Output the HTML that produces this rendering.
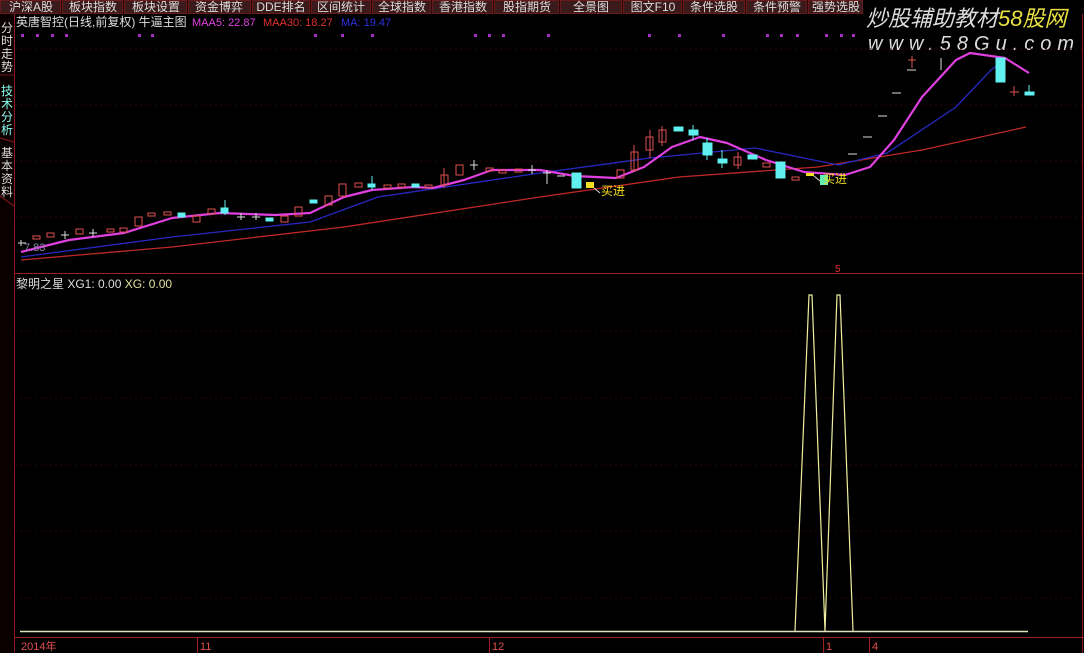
<!DOCTYPE html>
<html><head><meta charset="utf-8"><style>
body{margin:0;background:#000;width:1084px;height:653px;overflow:hidden;font-family:"Liberation Sans","Noto Sans CJK SC",sans-serif}
</style></head><body>
<svg width="1084" height="653" xmlns="http://www.w3.org/2000/svg" style="display:block;font-family:'Liberation Sans','Noto Sans CJK SC',sans-serif">
<rect width="1084" height="653" fill="#000"/>
<!-- menu -->
<rect x="0" y="0" width="862" height="14" fill="#2a0606"/>
<g fill="#3a1a1a" stroke="#6a1a1a" stroke-width="1">
<rect x="0.5" y="0.5" width="60" height="13"/><rect x="62.5" y="0.5" width="60" height="13"/><rect x="124.5" y="0.5" width="62" height="13"/><rect x="188.5" y="0.5" width="62" height="13"/><rect x="252.5" y="0.5" width="57" height="13"/><rect x="311.5" y="0.5" width="59" height="13"/><rect x="372.5" y="0.5" width="58" height="13"/><rect x="432.5" y="0.5" width="60" height="13"/><rect x="494.5" y="0.5" width="64" height="13"/><rect x="560.5" y="0.5" width="61" height="13"/><rect x="623.5" y="0.5" width="58" height="13"/><rect x="683.5" y="0.5" width="61" height="13"/><rect x="746.5" y="0.5" width="60" height="13"/><rect x="808.5" y="0.5" width="54" height="13"/>
</g>
<g fill="#ddd" font-size="12" text-anchor="middle">
<text x="31" y="11">沪深A股</text><text x="93" y="11">板块指数</text><text x="156" y="11">板块设置</text><text x="219" y="11">资金博弈</text><text x="281" y="11">DDE排名</text><text x="341" y="11">区间统计</text><text x="402" y="11">全球指数</text><text x="463" y="11">香港指数</text><text x="527" y="11">股指期货</text><text x="591" y="11">全景图</text><text x="653" y="11">图文F10</text><text x="714" y="11">条件选股</text><text x="777" y="11">条件预警</text><text x="836" y="11">强势选股</text>
</g>
<!-- watermark -->
<text x="866" y="26" font-size="22" font-style="italic" fill="#ddd">炒股辅助教材<tspan fill="#e8e040">58股网</tspan></text>
<text x="868" y="50" font-size="20" font-style="italic" fill="#ddd" letter-spacing="6">www.58Gu.com</text>
<!-- sidebar -->
<rect x="0" y="14" width="14" height="639" fill="#0a0000"/>
<line x1="14.5" y1="14" x2="14.5" y2="653" stroke="#8a1a1a"/>
<g font-size="12" text-anchor="middle">
<text x="7" y="32" fill="#ddd">分</text><text x="7" y="45" fill="#ddd">时</text><text x="7" y="58" fill="#ddd">走</text><text x="7" y="71" fill="#ddd">势</text>
<text x="7" y="95" fill="#8fe">技</text><text x="7" y="108" fill="#8fe">术</text><text x="7" y="121" fill="#8fe">分</text><text x="7" y="134" fill="#8fe">析</text>
<text x="7" y="157" fill="#ddd">基</text><text x="7" y="170" fill="#ddd">本</text><text x="7" y="183" fill="#ddd">资</text><text x="7" y="196" fill="#ddd">料</text>
</g>
<line x1="0" y1="75" x2="14" y2="75" stroke="#6a1a1a"/><line x1="0" y1="138" x2="14" y2="142" stroke="#8a1a1a"/><line x1="0" y1="196" x2="14" y2="206" stroke="#8a1a1a"/>
<!-- frame -->
<line x1="1082.5" y1="14" x2="1082.5" y2="653" stroke="#8a1a1a"/>
<line x1="15" y1="273.5" x2="1084" y2="273.5" stroke="#a02020"/>
<line x1="15" y1="637.5" x2="1084" y2="637.5" stroke="#a02020"/>
<!-- grid -->
<g stroke="#2a0606" stroke-dasharray="2,3">
<line x1="15" y1="49" x2="1082" y2="49"/><line x1="15" y1="105" x2="1082" y2="105"/><line x1="15" y1="161" x2="1082" y2="161"/><line x1="15" y1="217" x2="1082" y2="217"/>
<line x1="15" y1="331" x2="1082" y2="331"/><line x1="15" y1="398" x2="1082" y2="398"/><line x1="15" y1="465" x2="1082" y2="465"/><line x1="15" y1="531" x2="1082" y2="531"/><line x1="15" y1="598" x2="1082" y2="598"/>
</g>
<!-- title -->
<text x="16" y="26" font-size="12" fill="#ddd">英唐智控(日线,前复权) 牛逼主图</text>
<text x="192" y="26" font-size="11" fill="#e040e0">MAA5: 22.87</text>
<text x="263" y="26" font-size="11" fill="#e03030">MAA30: 18.27</text>
<text x="341" y="26" font-size="11" fill="#3030e0">MA: 19.47</text>
<g fill="#a030c0">
<rect x="21" y="34" width="3" height="3"/><rect x="36" y="34" width="3" height="3"/><rect x="51" y="34" width="3" height="3"/><rect x="65" y="34" width="3" height="3"/><rect x="138" y="34" width="3" height="3"/><rect x="151" y="34" width="3" height="3"/><rect x="314" y="34" width="3" height="3"/><rect x="341" y="34" width="3" height="3"/><rect x="371" y="34" width="3" height="3"/><rect x="474" y="34" width="3" height="3"/><rect x="488" y="34" width="3" height="3"/><rect x="502" y="34" width="3" height="3"/><rect x="547" y="34" width="3" height="3"/><rect x="648" y="34" width="3" height="3"/><rect x="678" y="34" width="3" height="3"/><rect x="722" y="34" width="3" height="3"/><rect x="766" y="34" width="3" height="3"/><rect x="780" y="34" width="3" height="3"/><rect x="796" y="34" width="3" height="3"/><rect x="825" y="34" width="3" height="3"/><rect x="840" y="34" width="3" height="3"/><rect x="852" y="34" width="3" height="3"/>
</g>
<!-- MA lines -->
<polyline fill="none" stroke="#c02828" stroke-width="1.3" points="21,260 172,247 344,227 540,197 679,177 818,167 922,150 1026,127"/>
<polyline fill="none" stroke="#2828c0" stroke-width="1.3" points="21,257 172,237 310,222 378,197 540,173 650,158 755,148 838,165 887,153 956,107 991,70 1005,60"/>
<polyline fill="none" stroke="#e040e0" stroke-width="2.2" stroke-linejoin="round" points="21,252 69,240 124,233 172,218 220,213 275,215 310,213 344,197 372,190 413,187 433,188 464,180 492,170 540,170 575,176 616,178 644,167 672,147 700,137 727,143 766,160 804,172 845,175 870,167 894,140 922,97 956,60 970,53 1005,58 1029,73"/>
<!-- candles -->
<g stroke-width="1">
<g fill="none" stroke="#e05050">
<rect x="33" y="236" width="7" height="3"/><rect x="47" y="233" width="7" height="4"/><rect x="76" y="229" width="7" height="5"/><rect x="107" y="229" width="7" height="3"/><rect x="120" y="228" width="7" height="4"/><rect x="135" y="217" width="7" height="9"/><rect x="148" y="213" width="7" height="3"/><rect x="164" y="212" width="7" height="3"/><rect x="193" y="216" width="7" height="6"/><rect x="208" y="209" width="7" height="5"/><rect x="281" y="216" width="7" height="6"/><rect x="295" y="207" width="7" height="9"/><rect x="325" y="196" width="7" height="9"/><rect x="339" y="184" width="7" height="12"/><rect x="355" y="183" width="7" height="4"/><rect x="384" y="185" width="7" height="3"/><rect x="398" y="184" width="7" height="3"/><rect x="425" y="185" width="7" height="3"/><rect x="441" y="175" width="7" height="10"/><rect x="456" y="165" width="7" height="10"/><rect x="486" y="168" width="7" height="3"/><rect x="499" y="170" width="7" height="3"/><rect x="515" y="169" width="7" height="3"/><rect x="617" y="170" width="7" height="8"/><rect x="631" y="152" width="7" height="18"/><rect x="646" y="137" width="7" height="13"/><rect x="659" y="130" width="7" height="12"/><rect x="734" y="157" width="7" height="8"/><rect x="763" y="163" width="7" height="4"/><rect x="792" y="177" width="7" height="3"/>
<line x1="650" y1="130" x2="650" y2="158"/><line x1="662" y1="126" x2="662" y2="146"/><line x1="634" y1="145" x2="634" y2="172"/><line x1="444" y1="168" x2="444" y2="188"/><line x1="738" y1="152" x2="738" y2="169"/>
<line x1="908" y1="60" x2="916" y2="60"/><line x1="912" y1="56" x2="912" y2="68"/><line x1="1010" y1="92" x2="1019" y2="92"/><line x1="1014" y1="86" x2="1014" y2="96"/>
</g>
<g fill="#60f0f0" stroke="#60f0f0">
<rect x="178" y="213" width="7" height="4"/><rect x="221" y="208" width="7" height="5"/><rect x="266" y="218" width="7" height="3"/><rect x="310" y="200" width="7" height="3"/><rect x="368" y="184" width="7" height="3"/><rect x="412" y="184" width="7" height="3"/><rect x="572" y="173" width="9" height="15"/><rect x="674" y="127" width="9" height="4"/><rect x="689" y="130" width="9" height="5"/><rect x="703" y="143" width="9" height="12"/><rect x="718" y="159" width="9" height="4"/><rect x="748" y="155" width="9" height="4"/><rect x="776" y="162" width="9" height="16"/><rect x="996" y="58" width="9" height="24"/><rect x="1025" y="92" width="9" height="3"/>
<line x1="372" y1="176" x2="372" y2="190"/><line x1="225" y1="200" x2="225" y2="215"/><line x1="693" y1="125" x2="693" y2="140"/><line x1="707" y1="138" x2="707" y2="160"/><line x1="722" y1="150" x2="722" y2="168"/><line x1="1029" y1="85" x2="1029" y2="95"/>
</g>
<g stroke="#ddd">
<line x1="61" y1="235" x2="69" y2="235"/><line x1="65" y1="231" x2="65" y2="239"/><line x1="89" y1="233" x2="97" y2="233"/><line x1="93" y1="229" x2="93" y2="237"/><line x1="237" y1="217" x2="245" y2="217"/><line x1="241" y1="213" x2="241" y2="220"/><line x1="252" y1="217" x2="260" y2="217"/><line x1="256" y1="213" x2="256" y2="220"/><line x1="470" y1="165" x2="478" y2="165"/><line x1="474" y1="160" x2="474" y2="170"/><line x1="528" y1="170" x2="536" y2="170"/><line x1="532" y1="165" x2="532" y2="174"/><line x1="543" y1="173" x2="551" y2="173"/><line x1="547" y1="170" x2="547" y2="184"/><line x1="557" y1="176" x2="565" y2="176"/>
<line x1="848" y1="154" x2="857" y2="154"/><line x1="863" y1="137" x2="872" y2="137"/><line x1="878" y1="116" x2="887" y2="116"/><line x1="892" y1="93" x2="901" y2="93"/><line x1="907" y1="70" x2="916" y2="70"/><line x1="941" y1="58" x2="941" y2="70"/>
<line x1="18" y1="243" x2="26" y2="243"/><line x1="21" y1="240" x2="21" y2="246"/>
</g>
<rect x="586" y="182" width="8" height="6" fill="#f0e020"/><rect x="806" y="173" width="8" height="3" fill="#f0e020"/>
<rect x="820" y="175" width="8" height="10" fill="#60f0b0"/>
<line x1="594" y1="188" x2="600" y2="193" stroke="#ddd"/><line x1="814" y1="176" x2="820" y2="181" stroke="#ddd"/>
</g>
<text x="601" y="195" font-size="12" fill="#f0e020">买进</text>
<text x="823" y="183" font-size="12" fill="#f0e020">买进</text>
<text x="24" y="251" font-size="11" fill="#88a">7.83</text>
<text x="835" y="272" font-size="10" fill="#e03030">5</text>
<!-- indicator -->
<text x="16" y="288" font-size="12" fill="#ddd">黎明之星 XG1: 0.00 <tspan fill="#e0e0a0">XG: 0.00</tspan></text>
<polyline fill="none" stroke="#f0f0a0" stroke-width="1.2" points="795,631 809,295 812,295 825,631"/>
<polyline fill="none" stroke="#f0f0a0" stroke-width="1.2" points="825,631 837,295 840,295 853,631"/>
<line x1="20" y1="631.5" x2="1028" y2="631.5" stroke="#e0e0c0" stroke-width="1.5"/>
<!-- axis -->
<g stroke="#a02020"><line x1="197.5" y1="638" x2="197.5" y2="653"/><line x1="489.5" y1="638" x2="489.5" y2="653"/><line x1="823.5" y1="638" x2="823.5" y2="653"/><line x1="869.5" y1="638" x2="869.5" y2="653"/></g>
<g font-size="11" fill="#e05050"><text x="21" y="650">2014年</text><text x="200" y="650">11</text><text x="492" y="650">12</text><text x="826" y="650">1</text><text x="872" y="650">4</text></g>
</svg>
</body></html>
